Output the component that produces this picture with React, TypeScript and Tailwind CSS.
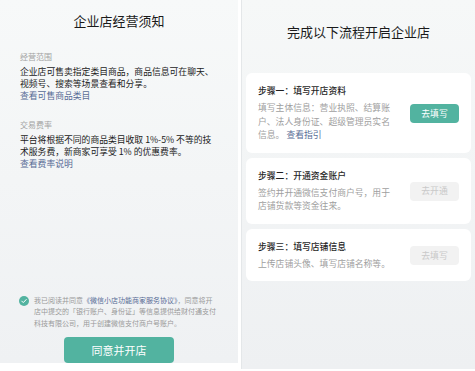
const FONT = "font-['Noto_Sans_CJK_SC','Noto_Sans',sans-serif]";

const CheckCircle = () => (
  <svg width="10" height="10" viewBox="0 0 20 20" className="shrink-0">
    <circle cx="10" cy="10" r="10" fill="#52b3a0" />
    <path d="M5.5 10.2l3 3 6-6.2" fill="none" stroke="#fff" strokeWidth="2" strokeLinecap="round" strokeLinejoin="round" />
  </svg>
);

const Section = ({ label, lines, link }: { label: string; lines: string[]; link: string }) => (
  <div className="flex flex-col">
    <div className="text-[8px] leading-[12px] text-[#a3a3a3]">{label}</div>
    <div className="mt-[3px] text-[8.8px] leading-[12px] text-[#222]">
      {lines.map((l) => (
        <div key={l} className="whitespace-nowrap">{l}</div>
      ))}
      <div className="text-[#576b95]">{link}</div>
    </div>
  </div>
);

const NoticePanel = () => (
  <div className="w-[238px] h-[363px] shrink-0 flex flex-col bg-gradient-to-b from-[#f7f9f9] to-[#eff1f3] px-[20px]">
    <h1 className="pt-[12px] text-center text-[13px] leading-[18px] text-[#1a1a1a]">企业店经营须知</h1>
    <div className="mt-[21px]">
      <Section
        label="经营范围"
        lines={["企业店可售卖指定类目商品，商品信息可在聊天、", "视频号、搜索等场景查看和分享。"]}
        link="查看可售商品类目"
      />
    </div>
    <div className="mt-[17px]">
      <Section
        label="交易费率"
        lines={["平台将根据不同的商品类目收取 1%-5% 不等的技", "术服务费，新商家可享受 1% 的优惠费率。"]}
        link="查看费率说明"
      />
    </div>
    <div className="mt-auto flex gap-[5px] -ml-[1px]">
      <div className="pt-[1px]">
        <CheckCircle />
      </div>
      <div className="text-[7px] leading-[11.8px] text-[#9a9a9a]">
        <div className="whitespace-nowrap">
          我已阅读并同意<span className="text-[#576b95]">《微信小店功能商家服务协议》</span>，同意将开
        </div>
        <div className="whitespace-nowrap">店中提交的「银行账户、身份证」等信息提供给财付通支付</div>
        <div className="whitespace-nowrap">科技有限公司，用于创建微信支付商户号账户。</div>
      </div>
    </div>
    <div className="mt-[7px] flex justify-center">
      <button className="w-[110px] h-[26px] rounded-[4px] bg-[#52b3a0] text-white text-[11px]">同意并开店</button>
    </div>
  </div>
);

type Step = { title: string; lines: React.ReactNode[]; action: string; active?: boolean };

const steps: Step[] = [
  {
    title: "步骤一：填写开店资料",
    lines: [
      "填写主体信息：营业执照、结算账",
      "户、法人身份证、超级管理员实名",
      <>
        信息。 <span className="text-[#576b95]">查看指引</span>
      </>,
    ],
    action: "去填写",
    active: true,
  },
  {
    title: "步骤二：开通资金账户",
    lines: ["签约并开通微信支付商户号，用于", "店铺货款等资金往来。"],
    action: "去开通",
  },
  {
    title: "步骤三：填写店铺信息",
    lines: ["上传店铺头像、填写店铺名称等。"],
    action: "去填写",
  },
];

const StepCard = ({ step }: { step: Step }) => (
  <div className="flex items-center justify-between rounded-[6px] bg-white pl-[12px] pr-[12px] pt-[12px] pb-[11px]">
    <div className="flex flex-col">
      <div className="text-[8.8px] leading-[12px] font-medium text-[#1f1f1f]">{step.title}</div>
      <div className="mt-[4px] text-[8.8px] leading-[13.5px] text-[#a0a0a0]">
        {step.lines.map((l, i) => (
          <div key={i} className="whitespace-nowrap">{l}</div>
        ))}
      </div>
    </div>
    <button
      className={
        step.active
          ? "w-[49px] h-[19px] rounded-[4px] bg-[#52b3a0] text-white text-[8.8px]"
          : "w-[49px] h-[19px] rounded-[4px] bg-[#f2f2f2] text-[#c9c9c9] text-[8.8px]"
      }
    >
      {step.action}
    </button>
  </div>
);

const StepsPanel = () => (
  <div className="w-[234px] h-[369px] shrink-0 ml-[3px] border-l border-[#e4e7e9] bg-gradient-to-b from-[#f6f8f8] to-[#eef0f2] px-[4px]">
    <h1 className="pt-[23px] text-center text-[13px] leading-[18px] text-[#1a1a1a]">完成以下流程开启企业店</h1>
    <div className="mt-[32px] flex flex-col gap-[5px]">
      {steps.map((s) => (
        <StepCard key={s.title} step={s} />
      ))}
    </div>
  </div>
);

export default function App() {
  return (
    <div className={`${FONT} w-[475px] h-[371px] flex items-start bg-white overflow-hidden`}>
      <NoticePanel />
      <StepsPanel />
    </div>
  );
}
